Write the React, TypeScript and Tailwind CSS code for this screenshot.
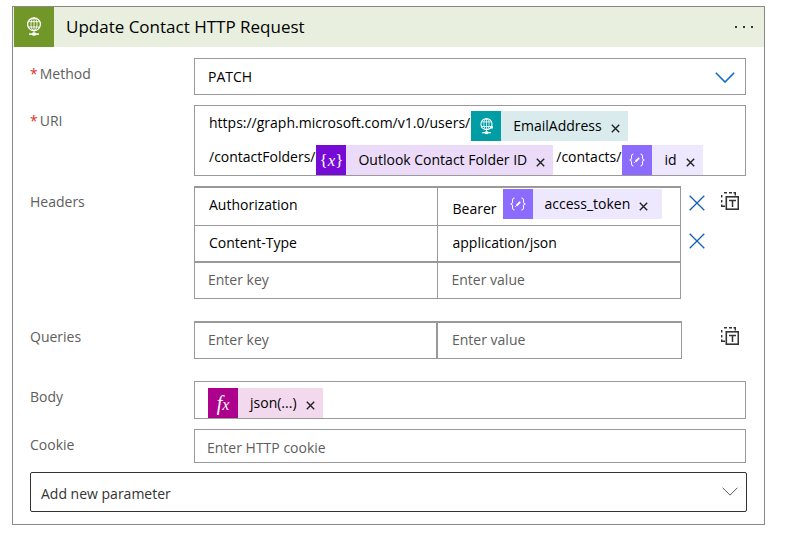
import type { ReactNode } from "react";

type Kind = "http" | "variable" | "compose" | "expression";

const field = "border border-[#999] bg-white";
const entry = "block h-[35px] w-full min-w-0 bg-transparent pb-[2px] outline-none placeholder:text-[#605e5c]";
const grid =
  "w-full min-w-0 flex-1 table-fixed border-separate border-spacing-0 [&_td]:border-[#999] [&_td]:p-0 [&_td]:align-top";

function Globe({ plug = false, className }: { plug?: boolean; className: string }) {
  return (
    <svg viewBox="0 0 18 22" className={className} fill="none" stroke="white" strokeWidth="1" aria-hidden="true">
      <circle cx="9" cy="8" r="7.2" strokeWidth="1.4" />
      <ellipse cx="9" cy="8" rx="3.4" ry="7.2" />
      <path d="M9 1v14M2.6 5h12.8M2.6 11h12.8M9 15v4" />
      <path d="M3.5 19h11" strokeWidth="1.8" />
      <path d="M7.2 17.2h3.6v3.6H7.2z" fill="white" stroke="none" />
      {plug && <path d="M14 10.500h3.200v3.200H14z" fill="white" stroke="none" />}
    </svg>
  );
}

function TokenIcon({ kind }: { kind: Kind }) {
  if (kind === "http") return <Globe plug className="h-[17px] w-[15px]" />;
  if (kind === "variable") {
    return (
      <span className="font-['Liberation_Serif',serif] text-[17px] leading-none">
        {"{"}
        <i>x</i>
        {"}"}
      </span>
    );
  }
  if (kind === "expression") {
    return (
      <i className="flex items-end font-['Liberation_Serif',serif] text-[20px] leading-none">
        f<span className="text-[16px] leading-none">x</span>
      </i>
    );
  }
  return (
    <svg viewBox="0 0 16 14" className="h-[14px] w-4" fill="none" stroke="white" strokeWidth="1" aria-hidden="true">
      <path d="M4.5 1 Q2.5 1 2.5 3 V5 Q2.5 7 0.7 7 Q2.5 7 2.5 9 V11 Q2.5 13 4.5 13" />
      <path d="M11.5 1 Q13.5 1 13.5 3 V5 Q13.5 7 15.3 7 Q13.5 7 13.5 9 V11 Q13.5 13 11.5 13" />
      <path d="M6.6 8.5 L10.2 4.9" strokeWidth="1.8" />
      <path d="M5.3 9.8 L6.8 8.3" />
    </svg>
  );
}

const tones: Record<Kind, [string, string]> = {
  http: ["bg-[#009da5]", "bg-[#d9ebed]"],
  variable: ["bg-[#770bd6]", "bg-[#ebdbf8]"],
  compose: ["bg-[#8c6cff]", "bg-[#eee8ff]"],
  expression: ["bg-[#ad008c]", "bg-[#f3d9ee]"],
};

function Token({ kind, children, wide = false }: { kind: Kind; children: string; wide?: boolean }) {
  const [dark, light] = tones[kind];
  return (
    <span className="inline-flex h-[30px] shrink-0 items-center whitespace-nowrap">
      <span className={`flex h-full w-[30px] items-center justify-center text-white ${dark}`}>
        <TokenIcon kind={kind} />
      </span>
      <span className={`flex h-full items-center gap-[9px] pl-3 ${wide ? "pr-[14px]" : "pr-2"} ${light}`}>
        {children}
        <button type="button" aria-label={`Remove ${children}`} className="pt-1">
          <svg viewBox="0 0 9 9" className="h-[9px] w-[9px]" stroke="#222" strokeWidth="1.4" aria-hidden="true">
            <path d="M0.8 0.8 L8.2 8.2 M8.2 0.8 L0.8 8.2" />
          </svg>
        </button>
      </span>
    </span>
  );
}

type RowProps = {
  label: string;
  required?: boolean;
  htmlFor?: string;
  id?: string;
  className?: string;
  children: ReactNode;
};

function Row({ label, required, htmlFor, id, className = "", children }: RowProps) {
  const text = (
    <>
      {required && <span className="mr-[2px] text-[#e0301e]">*</span>}
      {label}
    </>
  );
  const style = "w-[164px] shrink-0 pt-[6px] text-[#605e5c]";
  return (
    <div className={`flex items-start ${className}`}>
      {htmlFor ? (
        <label htmlFor={htmlFor} className={style}>
          {text}
        </label>
      ) : (
        <span id={id} className={style}>
          {text}
        </span>
      )}
      {children}
    </div>
  );
}

function Chevron({ className, strokeWidth }: { className: string; strokeWidth: number }) {
  return (
    <svg
      viewBox="0 0 20 11"
      className={`pointer-events-none absolute ${className}`}
      fill="none"
      stroke="currentColor"
      strokeWidth={strokeWidth}
      aria-hidden="true"
    >
      <path d="M0.8 0.8 L10 10 L19.2 0.8" />
    </svg>
  );
}

function Cross({ label }: { label: string }) {
  return (
    <button type="button" aria-label={label} className="block">
      <svg viewBox="0 0 16 16" className="h-4 w-4" stroke="#1160b7" strokeWidth="1.3" aria-hidden="true">
        <path d="M0.7 0.7 L15.3 15.3 M15.3 0.7 L0.7 15.3" />
      </svg>
    </button>
  );
}

function TextMode({ label }: { label: string }) {
  return (
    <button type="button" aria-label={label} className="block">
      <svg viewBox="0 0 18 18" className="h-[18px] w-[18px]" fill="none" stroke="#333" aria-hidden="true">
        <path d="M3 0.7h3M8 0.7h3M12.5 0.7h1.8V3.5M0.7 3v2.5M0.7 8v2.5M0.7 12.5v1.8H4" strokeWidth="1.4" />
        <rect x="5.3" y="4.8" width="12" height="12.4" strokeWidth="1.6" />
        <path d="M8 8.5h7M11.5 8.5v6.5" strokeWidth="1.5" />
      </svg>
    </button>
  );
}

export default function App() {
  return (
    <main className="bg-white pt-[6px] pr-5 pl-3 font-['Open_Sans','Noto_Sans',sans-serif] text-[14px] leading-5 text-black">
      <section className="border border-[#8a8886] pb-3">
        <header className="flex h-10 items-center bg-[#e8efdf] pl-px">
          <span className="flex h-10 w-10 items-center justify-center bg-[#709727]">
            <Globe className="h-5 w-4" />
          </span>
          <h1 className="ml-3 flex-1 text-[17px]">Update Contact HTTP Request</h1>
          <button type="button" aria-label="More commands" className="mr-[11px] flex gap-[6px]">
            <i className="h-[2px] w-[2px] bg-[#333]" />
            <i className="h-[2px] w-[2px] bg-[#333]" />
            <i className="h-[2px] w-[2px] bg-[#333]" />
          </button>
        </header>

        <form className="pt-[11px] pr-[17px] pl-[17px]">
          <div className="pr-px">
            <Row label="Method" required htmlFor="method">
              <div className="relative flex-1">
                <select id="method" className={`block h-[37px] w-full appearance-none px-[13px] ${field}`}>
                  <option>PATCH</option>
                </select>
                <Chevron strokeWidth={1.6} className="top-[14px] right-[11px] h-[11px] w-5 text-[#0b6bd3]" />
              </div>
            </Row>

            <Row label="URI" required id="uri-label" className="mt-[10px]">
              <div
                role="textbox"
                tabIndex={0}
                aria-labelledby="uri-label"
                className={`min-h-[71px] flex-1 px-[14px] pt-[5px] ${field}`}
              >
                <div className="flex items-start">
                  <span className="pt-[2px] pr-px">https://graph.microsoft.com/v1.0/users/</span>
                  <Token kind="http">EmailAddress</Token>
                </div>
                <div className="mt-1 flex items-start">
                  <span className="pt-[2px] pr-px">/contactFolders/</span>
                  <Token kind="variable">Outlook Contact Folder ID</Token>
                  <span className="pt-[2px] pr-px pl-[3px]">/contacts/</span>
                  <Token kind="compose">id</Token>
                </div>
              </div>
            </Row>

            <Row label="Headers" id="headers-label" className="mt-[10px]">
              <table aria-labelledby="headers-label" className={grid}>
                <tbody>
                  <tr>
                    <td className="border-x border-t-2 border-b">
                      <input aria-label="Header 1 key" defaultValue="Authorization" className={`px-[14px] ${entry}`} />
                    </td>
                    <td className="h-10 border-t-2 border-r border-b">
                      <div className="flex h-[37px] items-start gap-[6px] pt-px pl-[15px]">
                        <span className="pt-[10px]">Bearer</span>
                        <Token kind="compose" wide>
                          access_token
                        </Token>
                      </div>
                    </td>
                  </tr>
                  <tr>
                    <td className="border-x border-b-2">
                      <input aria-label="Header 2 key" defaultValue="Content-Type" className={`px-[14px] ${entry}`} />
                    </td>
                    <td className="border-r border-b-2">
                      <input aria-label="Header 2 value" defaultValue="application/json" className={`px-[15px] ${entry}`} />
                    </td>
                  </tr>
                  <tr>
                    <td className="border-x border-b">
                      <input aria-label="Header 3 key" placeholder="Enter key" className={`px-[13px] ${entry}`} />
                    </td>
                    <td className="border-r border-b">
                      <input aria-label="Header 3 value" placeholder="Enter value" className={`px-[14px] ${entry}`} />
                    </td>
                  </tr>
                </tbody>
              </table>
              <div className="flex w-[65px] shrink-0 items-start justify-between pt-[6px] pr-[7px] pl-2">
                <div className="flex flex-col gap-[22px] pt-[3px]">
                  <Cross label="Delete header 1" />
                  <Cross label="Delete header 2" />
                </div>
                <TextMode label="Switch headers to text mode" />
              </div>
            </Row>

            <Row label="Queries" id="queries-label" className="mt-[22px]">
              <table aria-labelledby="queries-label" className={grid}>
                <tbody>
                  <tr>
                    <td className="border-t-2 border-r-2 border-b border-l">
                      <input aria-label="Query key" placeholder="Enter key" className={`px-[13px] ${entry}`} />
                    </td>
                    <td className="border-t-2 border-r border-b">
                      <input aria-label="Query value" placeholder="Enter value" className={`px-[14px] ${entry}`} />
                    </td>
                  </tr>
                </tbody>
              </table>
              <div className="flex w-16 shrink-0 justify-end pt-[6px] pr-[7px]">
                <TextMode label="Switch queries to text mode" />
              </div>
            </Row>

            <Row label="Body" id="body-label" className="mt-[22px]">
              <div
                role="textbox"
                tabIndex={0}
                aria-labelledby="body-label"
                className={`flex min-h-[38px] flex-1 items-start px-[13px] pt-[6px] ${field}`}
              >
                <Token kind="expression">json(...)</Token>
              </div>
            </Row>

            <Row label="Cookie" htmlFor="cookie" className="mt-[10px]">
              <input
                id="cookie"
                placeholder="Enter HTTP cookie"
                className={`h-[34px] min-w-0 flex-1 px-3 pt-[2px] placeholder:text-[#605e5c] ${field}`}
              />
            </Row>
          </div>

          <div className="relative mt-[9px]">
            <select
              aria-label="Add new parameter"
              className="block h-10 w-full appearance-none rounded-xs border border-[#333] bg-white px-[10px] pt-[3px] text-[#333]"
            >
              <option>Add new parameter</option>
            </select>
            <Chevron strokeWidth={1.2} className="top-[15px] right-[9px] h-[9px] w-4 text-[#555]" />
          </div>
        </form>
      </section>
    </main>
  );
}
